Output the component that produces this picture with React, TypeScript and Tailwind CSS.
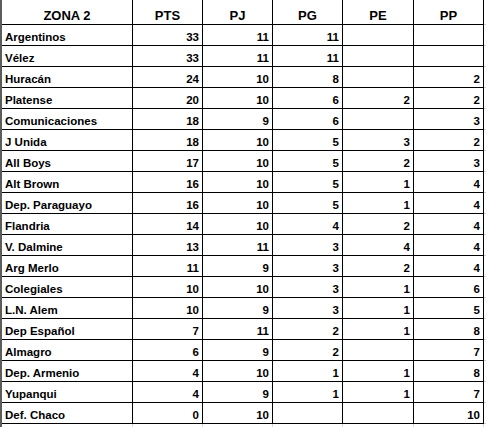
import React from "react";

type Row = [string, string, string, string, string, string];

const rows: Row[] = [
  ["Argentinos", "33", "11", "11", "", ""],
  ["Vélez", "33", "11", "11", "", ""],
  ["Huracán", "24", "10", "8", "", "2"],
  ["Platense", "20", "10", "6", "2", "2"],
  ["Comunicaciones", "18", "9", "6", "", "3"],
  ["J Unida", "18", "10", "5", "3", "2"],
  ["All Boys", "17", "10", "5", "2", "3"],
  ["Alt Brown", "16", "10", "5", "1", "4"],
  ["Dep. Paraguayo", "16", "10", "5", "1", "4"],
  ["Flandria", "14", "10", "4", "2", "4"],
  ["V. Dalmine", "13", "11", "3", "4", "4"],
  ["Arg Merlo", "11", "9", "3", "2", "4"],
  ["Colegiales", "10", "10", "3", "1", "6"],
  ["L.N. Alem", "10", "9", "3", "1", "5"],
  ["Dep Español", "7", "11", "2", "1", "8"],
  ["Almagro", "6", "9", "2", "", "7"],
  ["Dep. Armenio", "4", "10", "1", "1", "8"],
  ["Yupanqui", "4", "9", "1", "1", "7"],
  ["Def. Chaco", "0", "10", "", "", "10"],
];

const headers = ["ZONA 2", "PTS", "PJ", "PG", "PE", "PP"];

export default function App() {
  return (
    <div
      className="w-[486px] h-[427px] bg-white flex overflow-hidden text-black"
      style={{ fontFamily: '"Liberation Sans", Arial, sans-serif' }}
    >
      <div className="w-[2px] h-full bg-[#5c5c5c] shrink-0" />
      <div className="grid grid-cols-[131px_70px_70px_70px_71px_70px_2px] auto-rows-min content-start">
        {headers.map((h) => (
          <div
            key={h}
            className="h-[25px] border-r border-b border-black flex items-end justify-center pb-[1px] text-[13px] font-bold leading-[15px]"
          >
            {h}
          </div>
        ))}
        <div className="h-[25px] border-b border-[#d4d4d4]" />
        {rows.map((r) => (
          <React.Fragment key={r[0]}>
            <div className="h-[21px] border-r border-b border-black flex items-end pl-[3px] pb-[1px] text-[11.5px] font-bold leading-[13px] whitespace-nowrap">
              {r[0]}
            </div>
            {r.slice(1).map((v, i) => (
              <div
                key={i}
                className="h-[21px] border-r border-b border-black flex items-end justify-end pr-[3px] pb-[1px] text-[11.5px] font-bold leading-[13px]"
              >
                {v}
              </div>
            ))}
            <div className="h-[21px] border-b border-[#d4d4d4]" />
          </React.Fragment>
        ))}
        {headers.map((h) => (
          <div key={"f" + h} className="h-[4px] border-r border-[#d4d4d4]" />
        ))}
      </div>
    </div>
  );
}
